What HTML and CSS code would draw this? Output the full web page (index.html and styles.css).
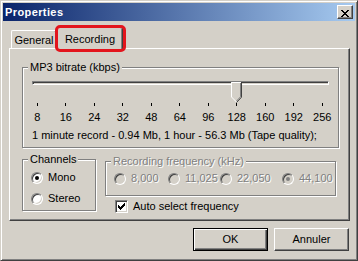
FILE: index.html
```html
<!DOCTYPE html>
<html lang="fr">
<head>
    <meta charset="UTF-8">
    <title>Properties</title>
    <link rel="stylesheet" href="styles.css">
</head>
<body>
    <div class="window">
        <div class="titlebar">
            <span class="title">Properties</span>
            <button type="button" class="close">
                <svg width="8" height="7" viewBox="0 0 8 7"><path d="M0 0h2v1H0zM6 0h2v1H6zM1 1h2v1H1zM5 1h2v1H5zM2 2h4v1H2zM3 3h2v1H3zM2 4h4v1H2zM1 5h2v1H1zM5 5h2v1H5zM0 6h2v1H0zM6 6h2v1H6z" fill="#000"/></svg>
            </button>
        </div>

        <div class="content">
            <div class="tabs">
                <div class="tab tab-general">General</div>
                <div class="tab active">Recording</div>
            </div>

            <div class="page">
                <fieldset class="group">
                    <legend>MP3 bitrate (kbps)</legend>
                    <div class="slider">
                        <div class="track"></div>
                        <svg class="thumb" width="11" height="21" viewBox="0 0 11 21">
                            <path d="M0 0H11V15L5.5 20.5L0 15Z" fill="#d4d0c8"/>
                            <path d="M0.5 15V0.5H10" fill="none" stroke="#fff"/>
                            <path d="M0.5 15L5.5 20" fill="none" stroke="#fff"/>
                            <path d="M10.5 0V15.2L5.5 20.5" fill="none" stroke="#404040"/>
                            <path d="M9.5 1V14.8L5.5 19" fill="none" stroke="#808080"/>
                        </svg>
                    </div>
                    <div class="scale">
                        <span>8</span><span>16</span><span>24</span><span>32</span><span>48</span><span>64</span>
                        <span>96</span><span>128</span><span>160</span><span>192</span><span>256</span>
                    </div>
                    <div class="info">1 minute record - 0.94 Mb, 1 hour - 56.3 Mb (Tape quality);</div>
                </fieldset>

                <div class="row">
                    <fieldset class="group channels">
                        <legend>Channels</legend>
                        <div class="radio first"><span class="dot on"></span>Mono</div>
                        <div class="radio second"><span class="dot"></span>Stereo</div>
                    </fieldset>

                    <div class="freq-col">
                        <fieldset class="group freq disabled">
                            <legend>Recording frequency (kHz)</legend>
                            <div class="freq-options">
                                <div class="radio"><span class="dot"></span>8,000</div>
                                <div class="radio"><span class="dot"></span>11,025</div>
                                <div class="radio"><span class="dot"></span>22,050</div>
                                <div class="radio"><span class="dot on"></span>44,100</div>
                            </div>
                        </fieldset>
                        <div class="check">
                            <span class="box">
                                <svg width="7" height="7" viewBox="0 0 7 7"><path d="M6 0h1v1H6zM5 1h2v1H5zM0 2h1v1H0zM4 2h3v1H4zM0 3h2v1H0zM3 3h3v1H3zM0 4h5v1H0zM1 5h3v1H1zM2 6h1v1H2z" fill="#000"/></svg>
                            </span>
                            Auto select frequency
                        </div>
                    </div>
                </div>
            </div>

            <div class="buttons">
                <button type="button" class="btn default">OK</button>
                <button type="button" class="btn">Annuler</button>
            </div>
        </div>
    </div>
</body>
</html>
```

FILE: styles.css
```css
body {
    margin: 0;
    font-family: "Liberation Sans", Arial, sans-serif;
    font-size: 11px;
    line-height: 13px;
    color: #000;
    background: #d4d0c8;
}
.window {
    box-sizing: border-box;
    width: 358px;
    height: 261px;
    padding: 2px;
    background: #d4d0c8;
    border: 1px solid;
    border-color: #d4d0c8 #404040 #404040 #d4d0c8;
    box-shadow: inset 1px 1px #fff, inset -1px -1px #808080;
}
.titlebar {
    display: flex;
    align-items: center;
    height: 18px;
    padding: 0 2px;
    background: linear-gradient(to right, #0a246a, #a6caf0);
}
.title {
    flex: 1;
    color: #fff;
    font-weight: bold;
    letter-spacing: 0.4px;
}
.close {
    box-sizing: border-box;
    width: 16px;
    height: 14px;
    padding: 2px 0 0 3px;
    background: #d4d0c8;
    border: 1px solid;
    border-color: #fff #404040 #404040 #fff;
    box-shadow: inset -1px -1px #808080;
}
.close svg {
    display: block;
}
.content {
    padding: 6px 5px 0 6px;
}
.tabs {
    display: flex;
    align-items: flex-end;
    height: 21px;
    padding-left: 2px;
}
.tab {
    box-sizing: border-box;
    height: 18px;
    padding-top: 3px;
    text-align: center;
    border: 1px solid;
    border-bottom: 0;
    border-color: #fff #404040 #fff #fff;
    border-radius: 2px 2px 0 0;
    box-shadow: inset -1px 0 #808080;
}
.tab-general {
    width: 46px;
}
.tab.active {
    position: relative;
    width: 66px;
    height: 22px;
    margin-bottom: -1px;
    padding-top: 5px;
    background: #d4d0c8;
}
.tab.active::after {
    content: "";
    position: absolute;
    top: -3px;
    left: -3px;
    right: -4px;
    bottom: -3px;
    border: 3px solid #e3151d;
    border-radius: 5px;
}
.page {
    box-sizing: border-box;
    height: 173px;
    padding: 12px 10px 0 12px;
    border: 1px solid;
    border-color: #fff #404040 #404040 #fff;
    box-shadow: inset -1px -1px #808080;
}
.group {
    margin: 0;
    padding: 0;
    min-width: 0;
    border: 1px solid #808080;
    box-shadow: inset 1px 1px #fff, 1px 1px #fff;
}
.group legend {
    margin-left: 5px;
    padding: 0 2px;
    background: #d4d0c8;
}
.slider {
    position: relative;
    height: 22px;
    margin: 1px 9px 0;
}
.track {
    box-sizing: border-box;
    height: 4px;
    margin-top: 7px;
    border: 1px solid;
    border-color: #808080 #fff #fff #808080;
    box-shadow: inset 1px 1px #404040, inset -1px -1px #d4d0c8;
}
.thumb {
    position: absolute;
    left: 199px;
    top: 1px;
}
.scale {
    display: grid;
    grid-template-columns: repeat(11, 28.5px);
}
.scale span {
    text-align: center;
}
.scale span::before {
    content: "";
    display: block;
    width: 1px;
    height: 3px;
    margin: 0 auto 5px;
    background: #000;
}
.info {
    margin-top: 5px;
    padding: 0 0 5px 9px;
}
.row {
    display: flex;
    align-items: flex-start;
    gap: 9px;
    margin-top: 5px;
}
.channels {
    box-sizing: border-box;
    width: 74px;
    padding-bottom: 5px;
}
.radio {
    display: flex;
    align-items: center;
    gap: 5px;
}
.channels .radio {
    padding-left: 8px;
}
.channels .first {
    margin-top: 5px;
}
.channels .second {
    margin-top: 8px;
}
.dot {
    box-sizing: border-box;
    display: flex;
    align-items: center;
    justify-content: center;
    width: 12px;
    height: 12px;
    border-radius: 50%;
    border: 1px solid;
    border-color: #808080 #fff #fff #808080;
    box-shadow: inset 1px 1px #404040, inset -1px -1px #d4d0c8;
    background: #fff;
}
.dot.on::after {
    content: "";
    width: 4px;
    height: 4px;
    border-radius: 50%;
    background: #000;
}
.freq-col {
    flex: 1;
    margin-top: 2px;
    margin-right: 3px;
}
.freq {
    padding-bottom: 10px;
}
.freq-options {
    display: grid;
    grid-template-columns: 54px 52px 62px auto;
    margin-top: 4px;
    padding-left: 8px;
}
.disabled {
    color: #808080;
    text-shadow: 1px 1px #fff;
}
.disabled .dot {
    background: #d4d0c8;
}
.disabled .dot.on::after {
    background: #808080;
}
.check {
    display: flex;
    align-items: center;
    gap: 5px;
    margin-top: 4px;
    padding-left: 10px;
}
.box {
    box-sizing: border-box;
    display: flex;
    align-items: center;
    justify-content: center;
    width: 13px;
    height: 13px;
    border: 1px solid;
    border-color: #808080 #fff #fff #808080;
    box-shadow: inset 1px 1px #404040, inset -1px -1px #d4d0c8;
    background: #fff;
}
.buttons {
    display: flex;
    justify-content: flex-end;
    gap: 6px;
    margin-top: 7px;
    padding-right: 1px;
}
.btn {
    box-sizing: border-box;
    width: 75px;
    height: 23px;
    padding: 0;
    font: inherit;
    color: #000;
    background: #d4d0c8;
    border: 1px solid;
    border-color: #fff #404040 #404040 #fff;
    box-shadow: inset -1px -1px #808080;
}
.btn.default {
    border-color: #000;
    box-shadow: inset 1px 1px #fff, inset -1px -1px #404040, inset -2px -2px #808080;
}
```
